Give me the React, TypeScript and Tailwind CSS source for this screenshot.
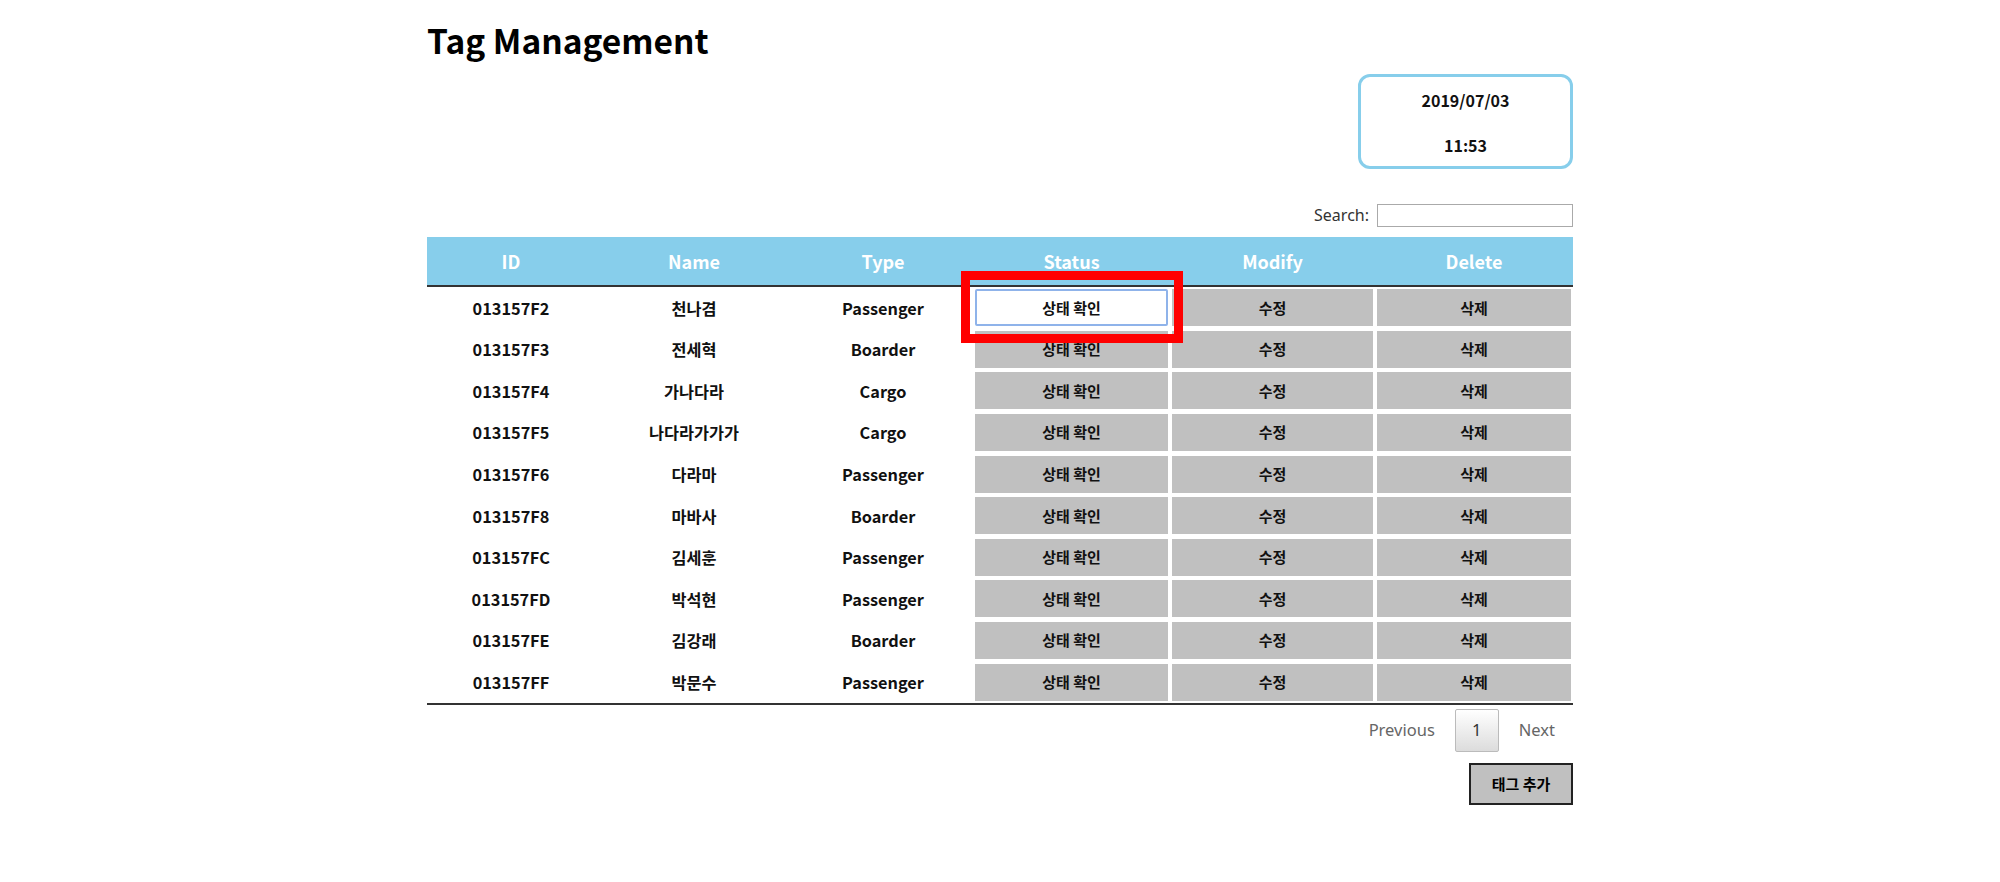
import React from "react";

const tags = [
  { id: "013157F2", name: "천나겸", type: "Passenger" },
  { id: "013157F3", name: "전세혁", type: "Boarder" },
  { id: "013157F4", name: "가나다라", type: "Cargo" },
  { id: "013157F5", name: "나다라가가가", type: "Cargo" },
  { id: "013157F6", name: "다라마", type: "Passenger" },
  { id: "013157F8", name: "마바사", type: "Boarder" },
  { id: "013157FC", name: "김세훈", type: "Passenger" },
  { id: "013157FD", name: "박석현", type: "Passenger" },
  { id: "013157FE", name: "김강래", type: "Boarder" },
  { id: "013157FF", name: "박문수", type: "Passenger" },
];

const cols = "grid grid-cols-[168px_198px_180px_197px_205px_198px]";
const kr = { fontFamily: '"Noto Sans CJK KR", "Noto Sans", sans-serif' };
const latin = { fontFamily: '"Noto Sans", "Open Sans", sans-serif' };

export default function App() {
  return (
    <div className="min-h-screen bg-white text-[#111]" style={kr}>
      <div className="mx-auto w-[1146px]">
        <h1 className="pt-[16px] text-[33.5px] font-bold leading-[48px] text-black">Tag Management</h1>

        <div className="mt-[10px] flex justify-end">
          <div className="flex h-[95px] w-[215px] flex-col items-center gap-[21px] rounded-[12px] border-[3px] border-[#87ceeb] pt-[11px] text-[16px] font-bold leading-[24px]">
            <span>2019/07/03</span>
            <span>11:53</span>
          </div>
        </div>

        <div className="mt-[34px] flex items-center justify-end gap-[8px]">
          <span className="text-[16px] text-[#333]" style={latin}>Search:</span>
          <input className="h-[23px] w-[196px] border border-[#aaa] bg-white px-1 text-sm outline-none" />
        </div>

        <div className="relative mt-[10px]">
          <div className={`${cols} h-[48px] items-center bg-[#87ceeb] text-[18px] font-bold text-white`}>
            {["ID", "Name", "Type", "Status", "Modify", "Delete"].map((h) => (
              <div key={h} className="text-center">{h}</div>
            ))}
          </div>
          <div className="border-b-2 border-[#333]">
            <div className="h-[2px] bg-[#333]" />
            {tags.map((t, i) => (
              <div key={t.id} className={`${cols} h-[41.6px] items-center text-[16.3px] font-bold`}>
                <div className="text-center">{t.id}</div>
                <div className="text-center">{t.name}</div>
                <div className="text-center">{t.type}</div>
                <div className="px-[2px]">
                  <button
                    className={`flex h-[37px] w-full items-center justify-center text-[15px] font-bold ${
                      i === 0 ? "rounded-[2px] border-2 border-[#8fb3ea] bg-white" : "bg-[#c0c0c0]"
                    }`}
                  >
                    상태 확인
                  </button>
                </div>
                <div className="px-[2px]">
                  <button className="flex h-[37px] w-full items-center justify-center bg-[#c0c0c0] text-[15px] font-bold">수정</button>
                </div>
                <div className="px-[2px]">
                  <button className="flex h-[37px] w-full items-center justify-center bg-[#c0c0c0] text-[15px] font-bold">삭제</button>
                </div>
              </div>
            ))}
          </div>

          {/* highlight annotation */}
          <div className="pointer-events-none absolute left-[534px] top-[34px] h-[72px] w-[222px] border-[9px] border-[#ff0000]" />
        </div>

        <div className="mt-[4px] flex justify-end text-[16.5px]" style={latin}>
          <span className="flex h-[43px] items-center px-[18px] text-[#666]">Previous</span>
          <span className="ml-[2px] flex h-[43px] w-[44px] items-center justify-center rounded-[2px] border border-[#bbb] bg-gradient-to-b from-white to-[#dcdcdc] text-[#333]">
            1
          </span>
          <span className="ml-[2px] flex h-[43px] items-center px-[18px] text-[#666]">Next</span>
        </div>

        <div className="mt-[11px] flex justify-end">
          <button className="h-[42px] w-[104px] border-2 border-[#222] bg-[#c0c0c0] text-[15px] font-bold text-black">태그 추가</button>
        </div>
      </div>
    </div>
  );
}
